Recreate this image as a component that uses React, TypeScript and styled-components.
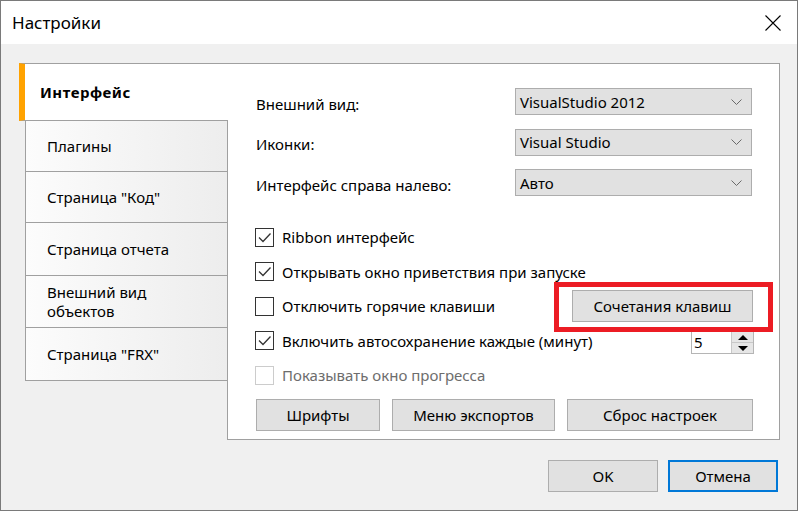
import React from "react";
import styled, { createGlobalStyle } from "styled-components";

const Global = createGlobalStyle`
  html, body { margin: 0; padding: 0; background: #fff; }
  body {
    font-family: "Noto Sans", "Segoe UI", sans-serif;
    font-size: 15px;
    color: #000;
  }
  * { box-sizing: border-box; }
`;

const Window = styled.div`
  width: 798px;
  height: 511px;
  display: flex;
  flex-direction: column;
  background: #f0f0f0;
  border: 1px solid #7a7a7a;
  overflow: hidden;
`;

const TitleBar = styled.div`
  height: 43px;
  flex: none;
  background: #fff;
  display: flex;
  align-items: center;
  justify-content: space-between;
  padding: 0 16px 0 11px;
`;

const Title = styled.div`
  font-size: 17px;
  color: #000;
`;

const CloseBtn = styled.div`
  width: 16px;
  height: 16px;
  display: flex;
`;

const Body = styled.div`
  flex: 1;
  display: flex;
  flex-direction: column;
  padding: 19px 17px 0 18px;
`;

const Main = styled.div`
  display: flex;
  height: 377px;
`;

const TabList = styled.div`
  width: 209px;
  margin-right: -1px;
  display: flex;
  flex-direction: column;
  position: relative;
  z-index: 1;
`;

const Tab = styled.div<{ $active?: boolean; $h: number }>`
  height: ${(p) => p.$h}px;
  display: flex;
  align-items: center;
  line-height: 19px;
  ${(p) =>
    p.$active
      ? `
    background: #fff;
    border-top: 1px solid #a0a0a0;
    border-bottom: 1px solid #a0a0a0;
    border-left: 6px solid #ffa200;
    padding-left: 15px;
    font-weight: 700;
    letter-spacing: 0.5px;
  `
      : `
    margin-left: 6px;
    background: linear-gradient(to right, #fcfcfc, #ededed);
    border: 1px solid #a0a0a0;
    border-top: none;
    padding-left: 21px;
  `}
`;

const Panel = styled.div`
  flex: 1;
  background: #fff;
  border: 1px solid #a0a0a0;
  padding: 24px 27px 0 28px;
  display: flex;
  flex-direction: column;
`;

const FormGrid = styled.div`
  display: grid;
  grid-template-columns: 1fr 237px;
  grid-auto-rows: 27px;
  row-gap: 13.5px;
  align-items: center;
`;

const Label = styled.div`
  padding-top: 4px;
`;

const Select = styled.div`
  height: 27px;
  background: #e1e1e1;
  border: 1px solid #adadad;
  display: flex;
  align-items: center;
  justify-content: space-between;
  padding: 0 9px 0 4px;
`;

const Checks = styled.div`
  margin-top: 24px;
  display: flex;
  flex-direction: column;
`;

const CheckRow = styled.div`
  height: 34.5px;
  display: flex;
  align-items: center;
`;

const Box = styled.div<{ $disabled?: boolean }>`
  width: 19px;
  height: 19px;
  flex: none;
  margin-left: -1px;
  border: 1px solid ${(p) => (p.$disabled ? "#cccccc" : "#333333")};
  background: #fff;
  margin-right: 8px;
  display: flex;
  align-items: center;
  justify-content: center;
`;

const CheckText = styled.div<{ $disabled?: boolean }>`
  flex: 1;
  color: ${(p) => (p.$disabled ? "#6d6d6d" : "#000")};
`;

const Button = styled.div<{ $w?: number; $focus?: boolean }>`
  width: ${(p) => (p.$w ? `${p.$w}px` : "auto")};
  height: 32px;
  background: #e1e1e1;
  border: ${(p) => (p.$focus ? "2px solid #0078d7" : "1px solid #adadad")};
  display: flex;
  align-items: center;
  justify-content: center;
`;

const Highlight = styled.div`
  position: relative;
  margin-right: -1px;
  &::after {
    content: "";
    position: absolute;
    top: -8px;
    bottom: -10px;
    left: -18px;
    right: -20px;
    border: 5px solid #ec1c24;
    pointer-events: none;
  }
`;

const Spinner = styled.div`
  width: 63px;
  height: 23px;
  margin-top: 4px;
  margin-right: -2px;
  border: 1px solid #b5b5b5;
  display: flex;
  background: #fff;
`;

const SpinValue = styled.div`
  flex: 1;
  padding-left: 2px;
  line-height: 21px;
`;

const SpinButtons = styled.div`
  width: 22px;
  display: flex;
  flex-direction: column;
  border-left: 1px solid #c8c8c8;
`;

const SpinHalf = styled.div`
  flex: 1;
  background: #e6e6e6;
  display: flex;
  align-items: center;
  justify-content: center;
  & + & { border-top: 1px solid #c8c8c8; }
`;

const ButtonRow = styled.div`
  margin-top: 6px;
  margin-right: -1px;
  display: grid;
  grid-template-columns: 124px 163px 1fr;
  column-gap: 12px;
`;

const Footer = styled.div`
  display: flex;
  justify-content: flex-end;
  gap: 10px;
  padding: 20px 2px 0 0;
`;

const Check = () => (
  <svg width="15" height="15" viewBox="0 0 15 15">
    <path d="M2 7.5 L6 11.5 L13.5 3.5" fill="none" stroke="#333" strokeWidth="1.3" />
  </svg>
);

const Chevron = () => (
  <svg width="11" height="6" viewBox="0 0 11 6">
    <path d="M0.5 0.5 L5.5 5.5 L10.5 0.5" fill="none" stroke="#6a6a6a" strokeWidth="1" />
  </svg>
);

const tabs: { label: React.ReactNode; h: number; active?: boolean }[] = [
  { label: "Интерфейс", h: 58, active: true },
  { label: "Плагины", h: 51 },
  { label: 'Страница "Код"', h: 51 },
  { label: "Страница отчета", h: 53 },
  { label: (<>Внешний вид<br />объектов</>), h: 52 },
  { label: 'Страница "FRX"', h: 53 },
];

export default function App() {
  return (
    <>
      <Global />
      <Window>
        <TitleBar>
          <Title>Настройки</Title>
          <CloseBtn>
            <svg width="16" height="16" viewBox="0 0 16 16">
              <path d="M0.5 0.5 L15.5 15.5 M15.5 0.5 L0.5 15.5" stroke="#000" strokeWidth="1.1" />
            </svg>
          </CloseBtn>
        </TitleBar>
        <Body>
          <Main>
            <TabList>
              {tabs.map((t, i) => (
                <Tab key={i} $active={t.active} $h={t.h}>
                  <span>{t.label}</span>
                </Tab>
              ))}
            </TabList>
            <Panel>
              <FormGrid>
                <Label>Внешний вид:</Label>
                <Select>
                  <span>VisualStudio 2012</span>
                  <Chevron />
                </Select>
                <Label>Иконки:</Label>
                <Select>
                  <span>Visual Studio</span>
                  <Chevron />
                </Select>
                <Label>Интерфейс справа налево:</Label>
                <Select>
                  <span>Авто</span>
                  <Chevron />
                </Select>
              </FormGrid>
              <Checks>
                <CheckRow>
                  <Box><Check /></Box>
                  <CheckText>Ribbon интерфейс</CheckText>
                </CheckRow>
                <CheckRow>
                  <Box><Check /></Box>
                  <CheckText>Открывать окно приветствия при запуске</CheckText>
                </CheckRow>
                <CheckRow>
                  <Box />
                  <CheckText>Отключить горячие клавиши</CheckText>
                  <Highlight>
                    <Button $w={181}>Сочетания клавиш</Button>
                  </Highlight>
                </CheckRow>
                <CheckRow>
                  <Box><Check /></Box>
                  <CheckText>Включить автосохранение каждые (минут)</CheckText>
                  <Spinner>
                    <SpinValue>5</SpinValue>
                    <SpinButtons>
                      <SpinHalf>
                        <svg width="10" height="5" viewBox="0 0 10 5"><path d="M0 5 L5 0 L10 5 Z" fill="#000" /></svg>
                      </SpinHalf>
                      <SpinHalf>
                        <svg width="10" height="5" viewBox="0 0 10 5"><path d="M0 0 L5 5 L10 0 Z" fill="#000" /></svg>
                      </SpinHalf>
                    </SpinButtons>
                  </Spinner>
                </CheckRow>
                <CheckRow>
                  <Box $disabled />
                  <CheckText $disabled>Показывать окно прогресса</CheckText>
                </CheckRow>
              </Checks>
              <ButtonRow>
                <Button>Шрифты</Button>
                <Button>Меню экспортов</Button>
                <Button>Сброс настроек</Button>
              </ButtonRow>
            </Panel>
          </Main>
          <Footer>
            <Button $w={110}>OK</Button>
            <Button $w={110} $focus>Отмена</Button>
          </Footer>
        </Body>
      </Window>
    </>
  );
}
